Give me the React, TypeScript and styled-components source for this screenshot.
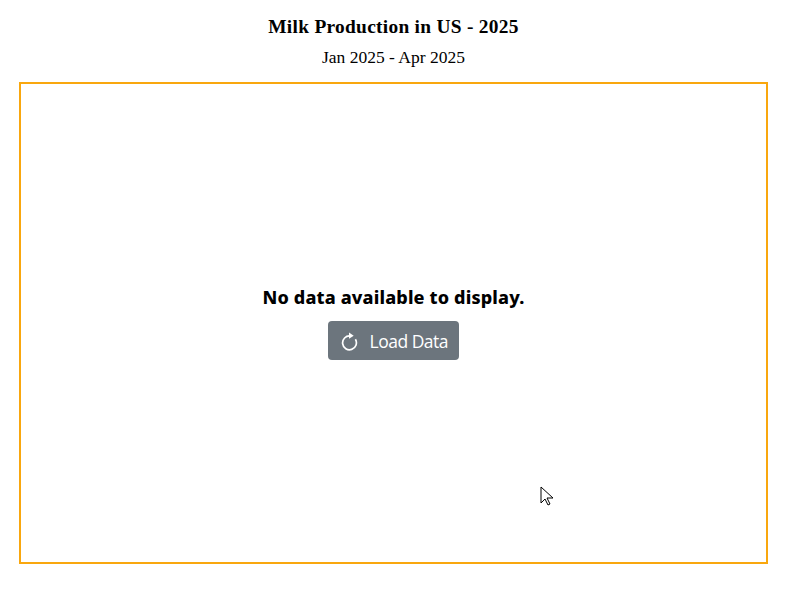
import React from "react";
import styled, { createGlobalStyle } from "styled-components";

const GlobalStyle = createGlobalStyle`
  *, *::before, *::after { box-sizing: border-box; }
  body { margin: 0; background: #fff; color: #000; overflow: hidden; }
`;

const Page = styled.main`
  position: relative;
  display: flex;
  flex-direction: column;
  align-items: center;
  width: 790px;
  height: 590px;
  padding: 15px 22px 0 19px;
  font-family: "Liberation Serif", serif;
`;

const Title = styled.h1`
  margin: 0;
  font-size: 19.4px;
  letter-spacing: 0.28px;
  line-height: 24px;
  font-weight: 700;
  white-space: nowrap;
`;

const Subtitle = styled.h2`
  margin: 6px 0 13px;
  font-size: 17.5px;
  line-height: 24px;
  font-weight: 400;
  white-space: nowrap;
`;

const ChartArea = styled.section`
  display: flex;
  flex-direction: column;
  align-items: center;
  width: 749px;
  height: 482px;
  padding-top: 201px;
  border: 2px solid #f9a70e;
  font-family: "Noto Sans", "Open Sans", sans-serif;
`;

const Message = styled.p`
  margin: 0 0 12px;
  font-size: 18px;
  letter-spacing: 0.15px;
  line-height: 24px;
  font-weight: 800;
  white-space: nowrap;
`;

const LoadButton = styled.button`
  display: flex;
  align-items: center;
  gap: 11.5px;
  width: 131px;
  height: 39px;
  padding: 0 0 0 13px;
  border: 0;
  border-radius: 4px;
  background: #6c757d;
  color: #fff;
  font: 400 17.5px/24px "Open Sans", sans-serif;
  letter-spacing: -0.5px;
  white-space: nowrap;
`;

const Pointer = styled.svg`
  position: absolute;
  left: 540px;
  top: 486px;
`;

export default function App() {
  return (
    <>
      <GlobalStyle />
      <Page>
        <Title>Milk Production in US - 2025</Title>
        <Subtitle>Jan 2025 - Apr 2025</Subtitle>
        <ChartArea>
          <Message>No data available to display.</Message>
          <LoadButton type="button">
            <svg width="17" height="20" viewBox="0 0 17 20" fill="none" aria-hidden="true">
              <path d="M9.2 5a6.9 6.9 0 1 0 5.2 3.3" stroke="#fff" strokeWidth="1.7" />
              <path d="M8 1.5l4.7 3.2L8 7.7z" fill="#fff" />
            </svg>
            <span>Load Data</span>
          </LoadButton>
        </ChartArea>
        <Pointer width="14" height="21" viewBox="0 0 14 21" aria-hidden="true">
          <path d="M1 1v16l4-4 3 6 2-1-3-6h6z" fill="#fff" stroke="#000" />
        </Pointer>
      </Page>
    </>
  );
}
